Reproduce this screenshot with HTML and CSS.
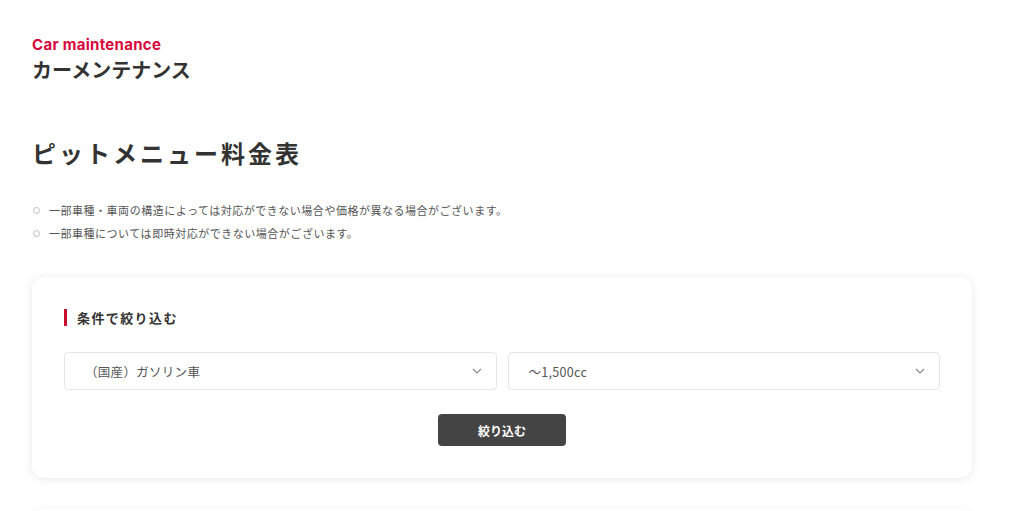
FILE: index.html
```html
<!DOCTYPE html>
<html lang="ja">
<head>
    <meta charset="UTF-8">
    <meta name="viewport" content="width=device-width, initial-scale=1.0">
    <title>ピットメニュー料金表 - カーメンテナンス</title>
    <link rel="stylesheet" href="styles.css">
</head>
<body>
    <div class="container">
        <div class="page-head">
            <p class="page-head-en">Car maintenance</p>
            <h2 class="page-head-ja">カーメンテナンス</h2>
        </div>

        <h1 class="title">ピットメニュー料金表</h1>

        <ul class="notes">
            <li>一部車種・車両の構造によっては対応ができない場合や価格が異なる場合がございます。</li>
            <li>一部車種については即時対応ができない場合がございます。</li>
        </ul>

        <form class="filter" onsubmit="return false;">
            <h3 class="filter-title">条件で絞り込む</h3>
            <div class="filter-grid">
                <div class="select">
                    <span>（国産）ガソリン車</span>
                    <svg width="10" height="6" viewBox="0 0 10 6"><path d="M1 1l4 4 4-4" fill="none" stroke="#8a8a8a" stroke-width="1.2"/></svg>
                </div>
                <div class="select">
                    <span>〜1,500cc</span>
                    <svg width="10" height="6" viewBox="0 0 10 6"><path d="M1 1l4 4 4-4" fill="none" stroke="#8a8a8a" stroke-width="1.2"/></svg>
                </div>
            </div>
            <div class="filter-actions">
                <button type="submit">絞り込む</button>
            </div>
        </form>

        <div class="next-card"></div>
    </div>
</body>
</html>
```

FILE: styles.css
```css
body {
    margin: 0;
    font-family: "Noto Sans CJK JP", "Noto Sans", sans-serif;
    color: #333;
    background-color: #fff;
}
.container {
    width: 940px;
    padding: 36px 32px 0;
}
.page-head-en {
    margin: 0;
    font-family: Inter, "Noto Sans", sans-serif;
    font-weight: 700;
    font-size: 15px;
    line-height: 17px;
    color: #d8083c;
    letter-spacing: 0.3px;
}
.page-head-ja {
    margin: 4px 0 0;
    font-size: 20px;
    line-height: 26px;
    font-weight: 700;
    color: #333;
}
.title {
    margin: 54px 0 0;
    font-size: 24px;
    line-height: 32px;
    letter-spacing: 3px;
    font-weight: 700;
    color: #333;
}
.notes {
    list-style: none;
    margin: 30px 0 0;
    padding: 0;
}
.notes li {
    position: relative;
    padding-left: 17px;
    font-size: 11px;
    letter-spacing: 0.52px;
    line-height: 23px;
    color: #555;
}
.notes li::before {
    content: "";
    position: absolute;
    left: 1px;
    top: 8px;
    width: 5px;
    height: 5px;
    border: 1px solid #bdbdbd;
    border-radius: 50%;
}
.filter {
    margin-top: 32px;
    padding: 32px 32px 32px;
    border-radius: 12px;
    box-shadow: 0 1px 10px rgba(0,0,0,0.09);
}
.filter-title {
    margin: 0;
    padding-left: 10px;
    border-left: 3px solid #c8102e;
    font-size: 13px;
    line-height: 17px;
    letter-spacing: 1.4px;
    font-weight: 700;
    color: #333;
}
.filter-grid {
    margin-top: 26px;
    display: grid;
    grid-template-columns: 1fr 1fr;
    gap: 11px;
}
.select {
    height: 38px;
    box-sizing: border-box;
    border: 1px solid #e6e6e6;
    border-radius: 4px;
    display: flex;
    align-items: center;
    justify-content: space-between;
    padding: 0 14px 0 20px;
    font-size: 12.5px;
    letter-spacing: 0.3px;
    color: #555;
}
.filter-actions {
    margin-top: 24px;
    display: flex;
    justify-content: center;
}
button {
    width: 128px;
    height: 32px;
    border: none;
    border-radius: 4px;
    background-color: #444;
    color: #fff;
    font-family: "Noto Sans CJK JP", sans-serif;
    font-size: 12px;
    font-weight: 700;
    cursor: pointer;
}
.next-card {
    margin-top: 31px;
    height: 40px;
    border-radius: 12px;
    box-shadow: 0 1px 10px rgba(0,0,0,0.06);
}
```
